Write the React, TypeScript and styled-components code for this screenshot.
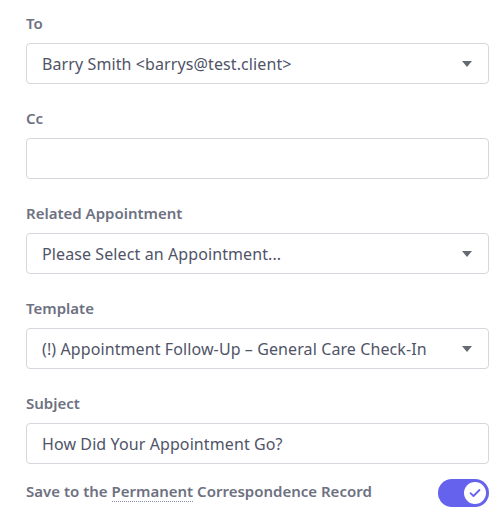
import React from "react"
import styled, {createGlobalStyle} from "styled-components"

const GlobalStyle = createGlobalStyle`
	body {
		margin: 0;
		background: #fff;
		font-family: "Noto Sans", "Open Sans", sans-serif;
	}
`

const Form = styled.div`
	display: flex;
	flex-direction: column;
	padding: 12px 11px 0 26px;
`

const Field = styled.div`
	display: flex;
	flex-direction: column;
	margin-bottom: 23px;
`

const Label = styled.label`
	font-size: 15px;
	font-weight: 600;
	line-height: 22px;
	color: #6d7181;
	margin-bottom: 9px;
`

const Box = styled.div`
	display: flex;
	align-items: center;
	height: 41px;
	box-sizing: border-box;
	padding: 0 16px 0 15px;
	border: 1px solid #d6d7dc;
	border-radius: 4px;
	font-size: 16px;
	letter-spacing: 0.1px;
	color: #4f5468;
`

const BoxText = styled.span`
	flex: 1;
	white-space: nowrap;
	overflow: hidden;
`

const Caret = styled.span`
	width: 0;
	height: 0;
	border-left: 5px solid transparent;
	border-right: 5px solid transparent;
	border-top: 6px solid #666a72;
	margin-left: 10px;
`

const ToggleRow = styled.div`
	display: flex;
	align-items: center;
	justify-content: space-between;
	margin-top: -8px;
`

const ToggleLabel = styled.span`
	font-size: 15px;
	font-weight: 600;
	color: #6d7181;
	padding-bottom: 4px;
`

const Dotted = styled.span`
	border-bottom: 1px dotted #8a90b0;
`

const Switch = styled.div<{ on: number }>`
	display: flex;
	align-items: center;
	justify-content: ${({on}) => on ? "flex-end" : "flex-start"};
	width: 51px;
	height: 28px;
	box-sizing: border-box;
	padding: 3px;
	border-radius: 14px;
	background: ${({on}) => on ? "#6563ee" : "#d6d7dc"};
`

const Knob = styled.div`
	display: flex;
	align-items: center;
	justify-content: center;
	width: 22px;
	height: 22px;
	border-radius: 50%;
	background: #fff;
`

const Select = ({value}: { value: string }) => (
	<Box>
		<BoxText>{value}</BoxText>
		<Caret/>
	</Box>
)

export default function App() {
	return (
		<>
			<GlobalStyle/>
			<Form>
				<Field>
					<Label>To</Label>
					<Select value="Barry Smith <barrys@test.client>"/>
				</Field>
				<Field>
					<Label>Cc</Label>
					<Box/>
				</Field>
				<Field>
					<Label>Related Appointment</Label>
					<Select value="Please Select an Appointment..."/>
				</Field>
				<Field>
					<Label>Template</Label>
					<Select value="(!) Appointment Follow-Up – General Care Check-In"/>
				</Field>
				<Field>
					<Label>Subject</Label>
					<Box><BoxText>How Did Your Appointment Go?</BoxText></Box>
				</Field>
				<ToggleRow>
					<ToggleLabel>Save to the <Dotted>Permanent</Dotted> Correspondence Record</ToggleLabel>
					<Switch on={1}>
						<Knob>
							<svg width="12" height="10" viewBox="0 0 12 10" fill="none">
								<path d="M1.5 5.2 L4.5 8 L10.5 2" stroke="#6563ee" strokeWidth="1.8" strokeLinecap="round" strokeLinejoin="round"/>
							</svg>
						</Knob>
					</Switch>
				</ToggleRow>
			</Form>
		</>
	)
}
